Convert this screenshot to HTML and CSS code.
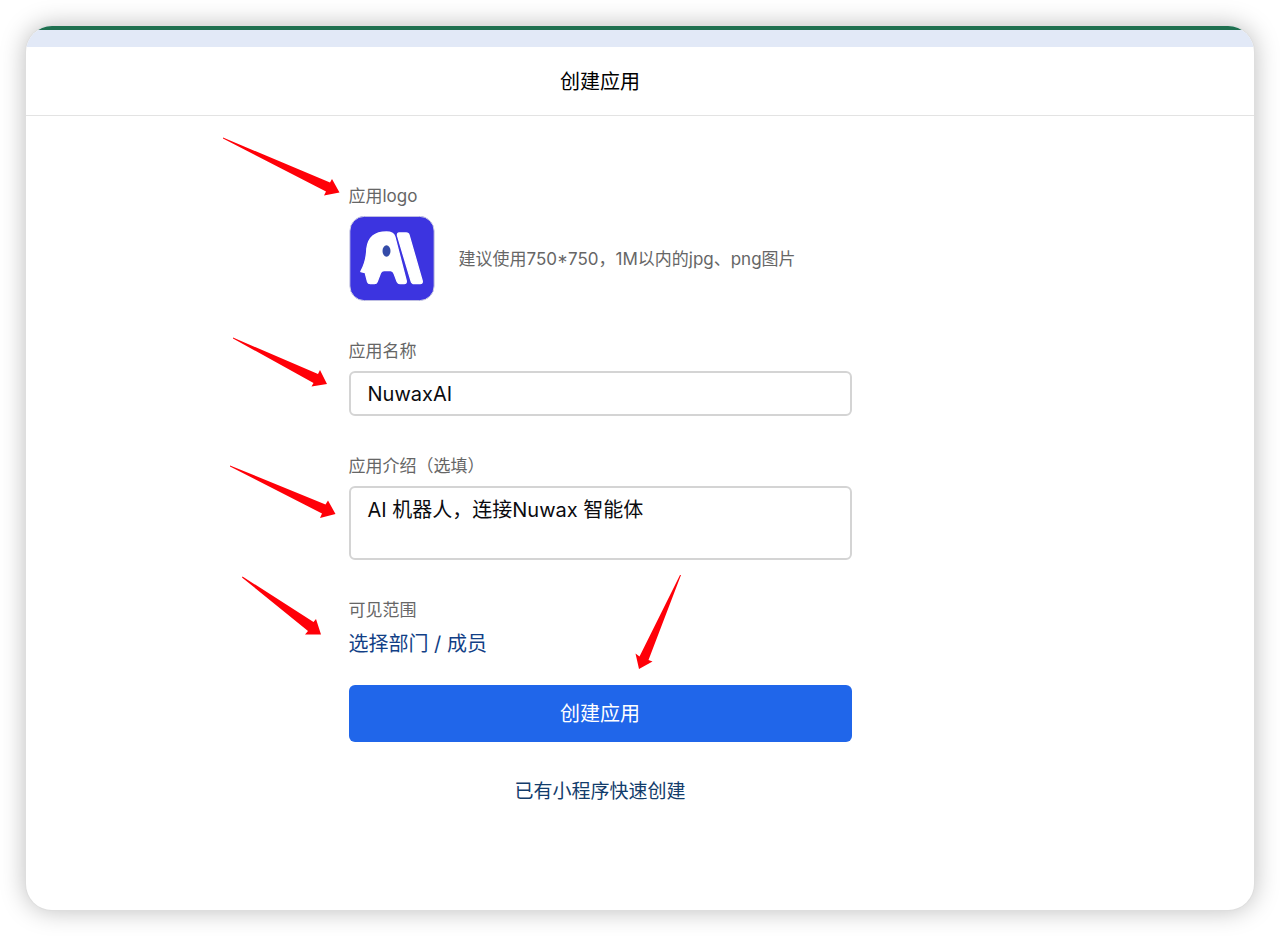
FILE: index.html
```
<!DOCTYPE html>
<html lang="zh-CN">
<head>
    <meta charset="UTF-8">
    <meta name="viewport" content="width=device-width, initial-scale=1.0">
    <title>创建应用</title>
    <link rel="stylesheet" href="styles.css">
</head>
<body>
    <div class="window">
        <div class="window-bar"></div>
        <header class="header">
            <h1>创建应用</h1>
        </header>

        <main class="content">
            <form class="form">
                <div class="field">
                    <span class="label">应用logo</span>
                    <div class="logo-row">
                        <svg class="logo" viewBox="0 0 255 255" role="img" aria-label="NuwaxAI">
                            <rect x="1" y="1" width="253" height="253" rx="44" fill="#3c34e0" stroke="#cfcfe2" stroke-width="3"/>
                            <g fill="#fff" stroke="#fff" stroke-width="4" stroke-linejoin="round">
                                <path d="M34 167Q51 136 52 98C56 65 76 48 111 48Q131 48 136 62L170 193Q172 203 164 203H151Q146 203 143 197L134 173Q131 164 123 164H104Q96 164 93 171L83 197Q81 203 75 203H62Q56 203 54 197L47 170Z"/>
                                <path d="M149 51H170Q177 51 179 58L218 194Q220 203 212 203H194Q187 203 185 196L144 59Q143 51 149 51Z"/>
                            </g>
                            <ellipse cx="111" cy="105" rx="12" ry="17" fill="#344ba8"/>
                        </svg>
                        <span class="hint">建议使用750*750，1M以内的jpg、png图片</span>
                    </div>
                </div>

                <div class="field">
                    <label class="label" for="app-name">应用名称</label>
                    <input class="control" type="text" id="app-name" value="NuwaxAI">
                </div>

                <div class="field">
                    <label class="label" for="app-desc">应用介绍（选填）</label>
                    <textarea class="control" id="app-desc" rows="2">AI 机器人，连接Nuwax 智能体</textarea>
                </div>

                <div class="field">
                    <span class="label">可见范围</span>
                    <a class="scope-link" href="#">选择部门 / 成员</a>
                </div>

                <button class="submit-btn" type="button">创建应用</button>
                <a class="quick-link" href="#">已有小程序快速创建</a>

                <!-- Guide arrows -->
                <svg class="arrows" viewBox="223 137 458 533" aria-hidden="true">
                    <polygon points="223,137.5 330,182.5 332,179 339.5,192.5 324,195.5 326,191.5 223,138.5"/>
                    <polygon points="233,337.5 318,374 320,370 327,384 311.5,386.5 313.5,383 233,338.5"/>
                    <polygon points="230,465.5 325.5,504.5 328,500.5 335.5,514 320,518 322,513.5 230,466.5"/>
                    <polygon points="242.5,576.5 313.5,622 316,619 321,634.5 305,634.5 308,631 242,577.5"/>
                    <polygon points="681,575 648.5,660 652.5,661.5 639,669 635.5,653.5 639.5,656.5 680,575"/>
                </svg>
            </form>
        </main>
    </div>
</body>
</html>
```
FILE: styles.css
```
* {
    box-sizing: border-box;
}

body {
    margin: 0;
    padding: 26px;
    min-height: 100vh;
    display: flex;
    background: #fff;
    color: #0b0b0f;
    font-family: Inter, "Noto Sans CJK SC", sans-serif;
}

.window {
    flex: 1;
    background: #fff;
    border-radius: 26px;
    overflow: hidden;
    box-shadow: 0 0 0 1px #dedede, 0 0 26px rgba(0, 0, 0, 0.28);
}

.window-bar {
    height: 21px;
    background: #e2e9f7;
    border-top: 4px solid #1f7050;
}

.header {
    padding: 21px 80px 19px 0;
    border-bottom: 1px solid #e3e3e3;
    text-align: center;
}

h1 {
    margin: 0;
    font-size: 20px;
    font-weight: 400;
    line-height: 28px;
    color: #000;
}

.content {
    padding: 68px 80px 68px 0;
}

.form {
    position: relative;
    display: flex;
    flex-direction: column;
    width: 100%;
    max-width: 503px;
    margin: 0 auto;
}

.field {
    display: flex;
    flex-direction: column;
    align-items: flex-start;
    gap: 8px;
    margin-bottom: 38px;
}

.field:nth-child(4) {
    margin-bottom: 27px;
}

.label,
.hint {
    font-size: 17px;
    line-height: 24px;
    color: #666;
}

.logo-row {
    display: flex;
    align-items: center;
    gap: 24px;
}

.logo {
    display: block;
    flex: none;
    width: 86px;
    height: 85px;
}

.control {
    display: block;
    width: 100%;
    padding: 7px 17px;
    border: 2px solid #d4d4d4;
    border-radius: 6px;
    background: #fff;
    color: #0b0b0f;
    font-family: inherit;
    font-size: 20px;
    line-height: 28px;
    resize: none;
    outline: none;
}

input.control {
    height: 45px;
}

.control:focus {
    border-color: #2066ea;
}

textarea.control {
    padding-top: 8px;
    padding-bottom: 6px;
    overflow: hidden;
}

a {
    color: #123f86;
    text-decoration: none;
}

.scope-link {
    font-size: 20px;
    line-height: 28px;
}

.submit-btn {
    padding: 15px 14px 14px;
    border: 0;
    border-radius: 6px;
    background: #2066ea;
    color: #fff;
    font-family: inherit;
    font-size: 20px;
    line-height: 28px;
    cursor: pointer;
}

.quick-link {
    align-self: center;
    margin-top: 36px;
    font-size: 19px;
    line-height: 28px;
    color: #123c6b;
}

.arrows {
    position: absolute;
    top: -47px;
    left: -126px;
    width: 458px;
    height: 533px;
    fill: #ff0008;
    pointer-events: none;
}
```
